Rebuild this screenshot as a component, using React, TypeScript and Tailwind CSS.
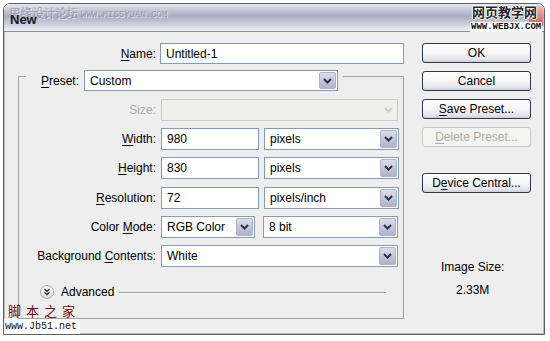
import React from "react";

function Chevron({ disabled }: { disabled?: boolean }) {
  return (
    <svg width="9" height="6" viewBox="0 0 9 6">
      <polyline
        points="1,1 4.5,4.5 8,1"
        fill="none"
        stroke={disabled ? "#cdcdcd" : "#27334f"}
        strokeWidth="2"
      />
    </svg>
  );
}

function Select({
  value,
  w,
  h = "h-[22px]",
  disabled,
}: {
  value?: string;
  w: string;
  h?: string;
  disabled?: boolean;
}) {
  return (
    <div
      className={`flex ${h} ${w} shrink-0 items-center border ${
        disabled ? "border-[#cbcbc4] bg-[#efefed]" : "border-[#7f9db9] bg-white"
      }`}
    >
      <span className="flex-1 truncate pl-[5px]">{value}</span>
      {disabled ? (
        <div className="flex h-full w-[18px] items-center justify-center">
          <Chevron disabled />
        </div>
      ) : (
        <div className="mr-[1px] flex h-[calc(100%-2px)] w-[17px] items-center justify-center rounded-[2px] border border-[#aeb1c7] bg-[linear-gradient(to_bottom,#dcdeea_0%,#c4c7da_50%,#afb2c9_100%)]">
          <Chevron />
        </div>
      )}
    </div>
  );
}

function Input({ value, w }: { value: string; w: string }) {
  return (
    <div className={`flex h-[22px] ${w} shrink-0 items-center border border-[#7f9db9] bg-white pl-[5px]`}>
      {value}
    </div>
  );
}

function Btn({
  children,
  disabled,
  className = "",
}: {
  children: React.ReactNode;
  disabled?: boolean;
  className?: string;
}) {
  return (
    <div
      className={`flex h-[20px] items-center justify-center rounded-[3px] border ${
        disabled
          ? "border-[#c8c8c2] bg-[#f3f3f1] text-[#acaca6]"
          : "border-[#2c3852] bg-[linear-gradient(to_bottom,#ffffff_0%,#f6f6f8_50%,#e4e4ea_85%,#cdcdd6_100%)] text-black"
      } ${className}`}
    >
      {children}
    </div>
  );
}

function U({ children }: { children: React.ReactNode }) {
  return <span className="underline underline-offset-[2px]">{children}</span>;
}

function Row({
  label,
  className = "",
  children,
  muted,
}: {
  label: React.ReactNode;
  className?: string;
  children: React.ReactNode;
  muted?: boolean;
}) {
  return (
    <div className={`flex h-[22px] items-center gap-[5px] ${className}`}>
      <div className={`w-[137px] shrink-0 text-right ${muted ? "text-[#a9a9a9]" : ""}`}>{label}</div>
      {children}
    </div>
  );
}

export default function App() {
  return (
    <div className="relative h-[341px] w-[550px] overflow-hidden bg-white pl-[3px] pt-[3px] font-['Liberation_Sans',Arial,sans-serif] text-[12px] leading-[14px] text-black">
      <div className="flex h-[332px] w-[542px] flex-col overflow-hidden rounded-t-[7px] border border-[#5f5f68]">
        {/* title bar */}
        <div className="h-[28px] shrink-0 border-b border-[#8e8e98] bg-[linear-gradient(to_bottom,#e8e8ef_0%,#c2c4d6_25%,#aaacc5_45%,#d2d3df_78%,#f0f0f4_100%)] pl-[6px] pt-[8px]">
          <span className="relative z-10 text-[13px] font-bold leading-[16px] text-[#1a1a1a]">New</span>
        </div>

        {/* body */}
        <div className="flex flex-1 bg-[#eeeeee] shadow-[inset_1px_0_0_#b8b8c0,inset_-1px_0_0_#b8b8c0,inset_0_-1px_0_#b8b8c0]">
          {/* left form */}
          <div className="flex w-[400px] shrink-0 flex-col">
            <div className="mt-[11px] flex h-[21px] items-center gap-[4px]">
              <div className="w-[152px] shrink-0 text-right">
                <U>N</U>ame:
              </div>
              <div className="flex h-[21px] w-[246px] items-center border border-[#7f9db9] bg-white pl-[5px]">
                Untitled-1
              </div>
            </div>

            {/* group box */}
            <div className="ml-[14px] mt-[12px] flex h-[243px] w-[386px] flex-col border border-[#a2a2a2]">
              <div className="-mt-[7px] flex h-[21px] items-center">
                <div className="w-[7px] shrink-0" />
                <div className="flex h-[21px] items-center gap-[5px] bg-[#eeeeee] pl-[15px] pr-[5px]">
                  <span>
                    <U>P</U>reset:
                  </span>
                  <Select value="Custom" w="w-[254px]" h="h-[21px]" />
                </div>
              </div>

              <Row label="Size:" muted className="mt-[8px]">
                <Select w="w-[237px]" disabled />
              </Row>
              <Row
                label={
                  <>
                    <U>W</U>idth:
                  </>
                }
                className="mt-[7px]"
              >
                <Input value="980" w="w-[98px]" />
                <Select value="pixels" w="w-[135px]" />
              </Row>
              <Row
                label={
                  <>
                    <U>H</U>eight:
                  </>
                }
                className="mt-[7px]"
              >
                <Input value="830" w="w-[98px]" />
                <Select value="pixels" w="w-[135px]" />
              </Row>
              <Row
                label={
                  <>
                    <U>R</U>esolution:
                  </>
                }
                className="mt-[8px]"
              >
                <Input value="72" w="w-[98px]" />
                <Select value="pixels/inch" w="w-[135px]" />
              </Row>
              <Row
                label={
                  <>
                    Color <U>M</U>ode:
                  </>
                }
                className="mt-[7px]"
              >
                <Select value="RGB Color" w="w-[94px]" />
                <div className="ml-[3px]">
                  <Select value="8 bit" w="w-[135px]" />
                </div>
              </Row>
              <Row
                label={
                  <>
                    Background <U>C</U>ontents:
                  </>
                }
                className="mt-[7px]"
              >
                <Select value="White" w="w-[237px]" />
              </Row>

              <div className="mt-[18px] flex h-[14px] items-center pl-[21px] pr-[17px]">
                <div className="flex h-[14px] w-[14px] shrink-0 items-center justify-center rounded-full border border-[#a9a9b2] bg-[linear-gradient(to_bottom,#ffffff,#d8d8e0)]">
                  <svg width="8" height="8" viewBox="0 0 8 8">
                    <polyline points="1.5,1 4,3.3 6.5,1" fill="none" stroke="#2a2a2a" strokeWidth="1.3" />
                    <polyline points="1.5,4.3 4,6.6 6.5,4.3" fill="none" stroke="#2a2a2a" strokeWidth="1.3" />
                  </svg>
                </div>
                <span className="ml-[7px]">Advanced</span>
                <div className="ml-[5px] h-px flex-1 bg-[#a0a0a0] shadow-[0_1px_0_#ffffff]" />
              </div>
            </div>
          </div>

          {/* right column */}
          <div className="ml-[18px] flex w-[109px] shrink-0 flex-col">
            <Btn className="mt-[11px]">OK</Btn>
            <Btn className="mt-[8px]">Cancel</Btn>
            <Btn className="mt-[8px]">
              <span>
                <U>S</U>ave Preset...
              </span>
            </Btn>
            <Btn disabled className="mt-[8px]">
              <span>
                <U>D</U>elete Preset...
              </span>
            </Btn>
            <Btn className="mt-[26px]">
              <span>
                D<U>e</U>vice Central...
              </span>
            </Btn>
            <div className="mt-[67px] pl-[19px]">Image Size:</div>
            <div className="mt-[9px] pl-[34px]">2.33M</div>
          </div>
        </div>
      </div>

      {/* watermarks over the screenshot */}
      <div className="absolute left-[9px] top-[6px] font-['Noto_Sans_CJK_SC',sans-serif] text-[12px] leading-[14px] tracking-[-0.5px] text-[#8e8e9c] opacity-70 [text-shadow:1px_1px_0_#f4f4f8]">
        思缘设计论坛
      </div>
      <div className="absolute left-[81px] top-[11px] font-['Liberation_Mono',monospace] text-[9px] leading-[9px] text-[#8e8e9c] opacity-70 [text-shadow:1px_1px_0_#f4f4f8]">
        WWW.MISSYUAN.COM
      </div>
      <div className="absolute left-[529px] top-[6px] h-[20px] w-[14px] rounded-tr-[4px] bg-[linear-gradient(to_bottom,#f0b8b8,#c85a5a)]" />
      <div className="absolute left-[472px] top-[4px] font-['Noto_Sans_CJK_SC',sans-serif] text-[13px] font-bold leading-[15px] text-[#262626] [text-shadow:1px_0_#fff,-1px_0_#fff,0_1px_#fff,0_-1px_#fff]">
        网页教学网
      </div>
      <div className="absolute left-[470px] top-[22px] bg-white px-[1px] font-['Liberation_Mono',monospace] text-[9px] font-bold leading-[10px] text-[#111]">
        WWW.WEBJX.COM
      </div>
      <div className="absolute left-[8px] top-[303px] font-['Noto_Sans_CJK_SC',sans-serif] text-[13px] leading-[15px] tracking-[5px] text-[#7a0a0a]">
        脚本之家
      </div>
      <div className="absolute left-[4px] top-[319px] h-[15px] w-[76px] bg-white pl-[1px] font-['Liberation_Mono',monospace] text-[10px] leading-[15px] text-[#111]">
        www.Jb51.net
      </div>
    </div>
  );
}
